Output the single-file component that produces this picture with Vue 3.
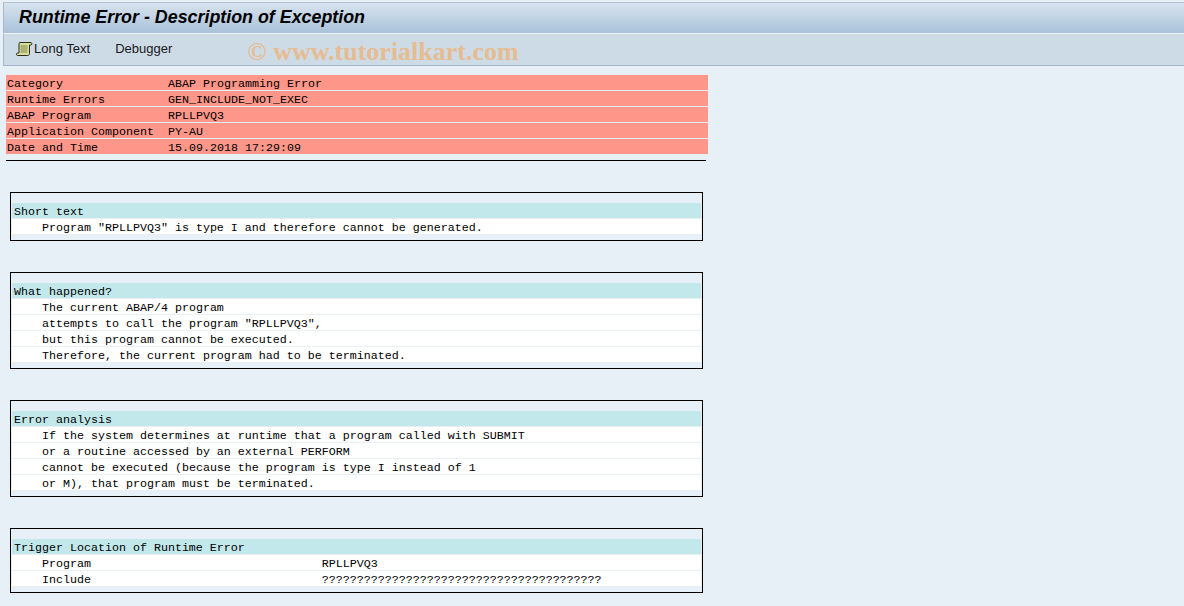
<script setup>
const summary = [
  ['Category', 'ABAP Programming Error'],
  ['Runtime Errors', 'GEN_INCLUDE_NOT_EXEC'],
  ['ABAP Program', 'RPLLPVQ3'],
  ['Application Component', 'PY-AU'],
  ['Date and Time', '15.09.2018 17:29:09'],
]
const boxes = [
  { title: 'Short text', lines: ['Program "RPLLPVQ3" is type I and therefore cannot be generated.'] },
  { title: 'What happened?', lines: ['The current ABAP/4 program', 'attempts to call the program "RPLLPVQ3",', 'but this program cannot be executed.', 'Therefore, the current program had to be terminated.'] },
  { title: 'Error analysis', lines: ['If the system determines at runtime that a program called with SUBMIT', 'or a routine accessed by an external PERFORM', 'cannot be executed (because the program is type I instead of 1', 'or M), that program must be terminated.'] },
  { title: 'Trigger Location of Runtime Error', lines: ['Program                                 RPLLPVQ3', 'Include                                 ????????????????????????????????????????'] },
]
</script>

<template>
  <div class="page">
    <header class="title"><h1>Runtime Error - Description of Exception</h1></header>
    <nav class="toolbar">
      <span class="btn">
        <svg width="18" height="16" viewBox="0 0 18 16">
          <path d="M4.500 1.500h11.500c1 0 1.200 2.500 0 2.500h-1.500v8.500c0 1.500-1 2-2 2H2.500c-1.300 0-1.500-2.500 0-2.500H4V3c0-1 .5-1.500.5-1.500z" fill="#dcdc9c" stroke="#26301a" stroke-width="1"/>
          <path d="M5.500 5h7M5.500 7h7M5.500 9h7M5.500 11h7" stroke="#7c8a48" stroke-width="1"/>
        </svg>
        Long Text
      </span>
      <span class="btn debugger">Debugger</span>
      <span class="mark">© www.tutorialkart.com</span>
    </nav>
    <main class="content">
      <section class="summary">
        <div v-for="row in summary" :key="row[0]" class="sum-row">
          <span class="sum-key">{{ row[0] }}</span><span>{{ row[1] }}</span>
        </div>
      </section>
      <hr class="rule" />
      <section v-for="box in boxes" :key="box.title" class="box">
        <div class="box-head">{{ box.title }}</div>
        <div v-for="line in box.lines" :key="line" class="box-line">{{ line }}</div>
      </section>
    </main>
  </div>
</template>

<style>
html, body { margin: 0; background: #e8f0f7; }
</style>

<style scoped>
.page {
  width: 1184px;
  height: 606px;
  overflow: hidden;
  background: #e8f0f7;
  box-sizing: border-box;
  padding-top: 2px;
  padding-left: 3px;
}
.title {
  height: 31px;
  background: linear-gradient(#d8e3ee, #a9c2da);
  border-top: 1px solid #b4c2d2;
  border-left: 1px solid #a8b8cb;
  box-sizing: border-box;
  padding-left: 15px;
}
.title h1 {
  margin: 0;
  font: italic bold 17.85px/28px "Liberation Sans", Arial, sans-serif;
  color: #000;
}
.toolbar {
  height: 33px;
  background: #cddbe7;
  border-top: 1px solid #eef3f8;
  border-bottom: 1px solid #a3b5ca;
  border-left: 1px solid #a8b8cb;
  box-sizing: border-box;
  display: flex;
  align-items: center;
  padding-left: 11px;
  font: 13px "Liberation Sans", Arial, sans-serif;
  color: #1a1a1a;
}
.btn { display: flex; align-items: center; gap: 1px; margin-top: -2px; }
.debugger { margin-left: 25px; }
.mark {
  margin-left: 75px;
  font: bold 26px "Liberation Serif", "Times New Roman", serif;
  color: #e6bc90;
  margin-top: 4px;
  white-space: nowrap;
}
.content {
  padding: 9px 0 0 3px;
  font: 11.67px/19px "Liberation Mono", "Courier New", monospace;
  color: #000;
  white-space: pre;
}
.summary { width: 702px; display: flex; flex-direction: column; gap: 1px; }
.sum-row { height: 15px; background: #ff968a; padding-left: 1px; }
.sum-key { display: inline-block; width: 161px; }
.rule {
  width: 700px;
  height: 1px;
  border: 0;
  background: #000;
  margin: 6px 0 31px;
}
.box {
  width: 693px;
  margin: 0 0 31px 4px;
  box-sizing: border-box;
  border: 1px solid #000;
  padding: 10px 1px 6px;
  display: flex;
  flex-direction: column;
  gap: 1px;
}
.box-head { height: 15px; background: #c2e8eb; padding-left: 2px; }
.box-line { height: 15px; background: #fff; padding-left: 30px; }
</style>
